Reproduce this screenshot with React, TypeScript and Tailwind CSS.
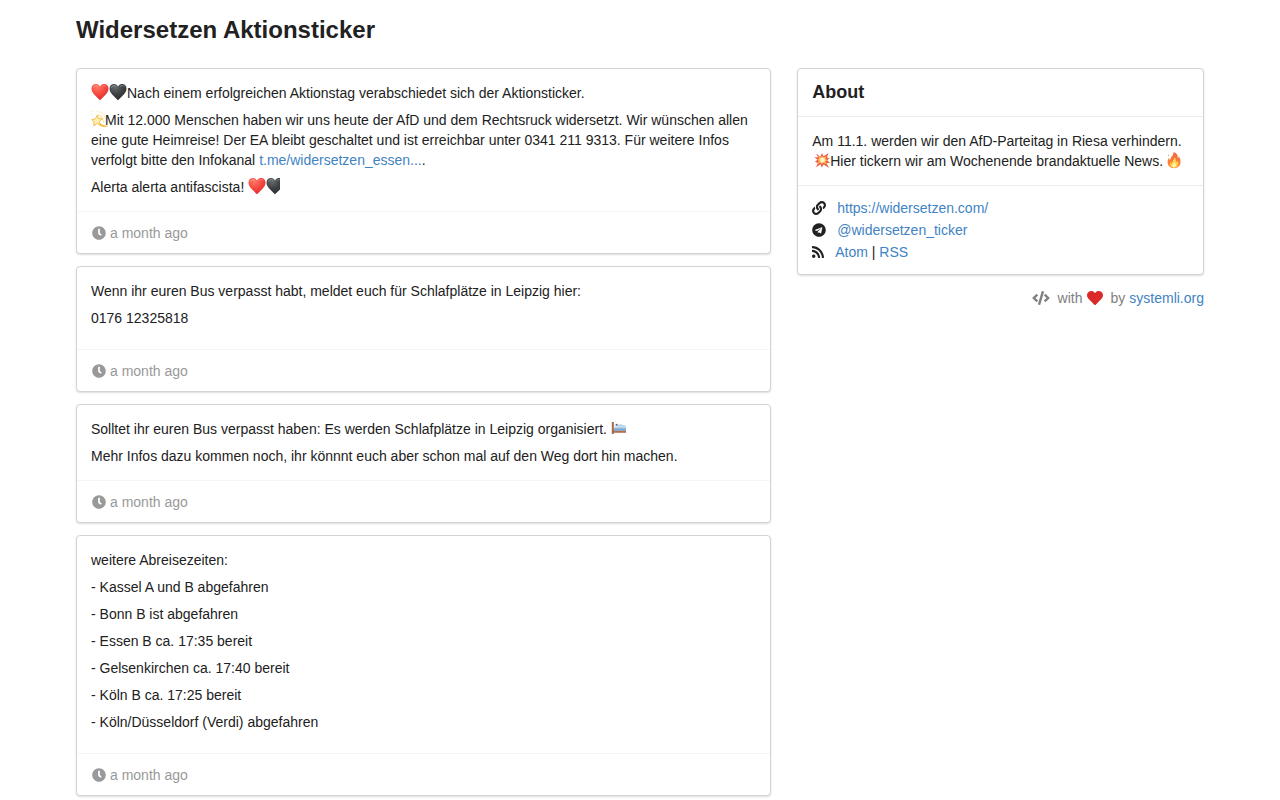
import type { ReactNode } from "react";
import { FaClock, FaCode, FaHeart, FaLink, FaRss, FaTelegram } from "react-icons/fa";

const Heart = ({ dark = false, clipped = false }: { dark?: boolean; clipped?: boolean }) => {
  const id = dark ? "heart-dark" : "heart-red";
  return (
    <svg
      viewBox={clipped ? "0 0 14 18" : "0 0 18 18"}
      className={clipped ? "inline-block h-[18px] w-3.5 align-top" : "inline-block h-[18px] w-[18px] align-top"}
      role="img"
      aria-label={dark ? "black heart" : "red heart"}
    >
      <defs>
        <radialGradient id={id} cx="0.35" cy="0.2" r="0.85">
          <stop offset="0" stopColor={dark ? "#686b6d" : "#ff7a68"} />
          <stop offset="0.5" stopColor={dark ? "#404345" : "#f64a40"} />
          <stop offset="1" stopColor={dark ? "#292b2d" : "#d9292b"} />
        </radialGradient>
      </defs>
      <path
        d="M9 3.6C7.9 1.6 6.4 1 4.9 1 2.3 1 .5 3 .5 5.6c0 4.6 4.3 7.5 8.5 11.7 4.2-4.2 8.5-7.1 8.5-11.7C17.5 3 15.7 1 13.1 1 11.6 1 10.1 1.6 9 3.6z"
        fill={`url(#${id})`}
      />
      <path
        d="M2.5 4.5C3.2 2.8 5 2.2 6.6 3M11.4 3.2c1.3-1 3-.8 4 .4"
        fill="none"
        stroke="#fff"
        strokeOpacity="0.3"
        strokeLinecap="round"
      />
    </svg>
  );
};

const Dizzy = () => (
  <svg viewBox="0 0 18 18" className="-mr-1 inline-block h-[18px] w-[18px] align-top" role="img" aria-label="dizzy">
    <path d="M.5 1.3c.7-.6 1.5-.5 2 .2M.5 5l1.2-.3" stroke="#f9e3a5" fill="none" />
    <path d="M6 1.5c5 .5 8 4 8.500 8" stroke="#fdf0c8" strokeWidth="1.2" fill="none" />
    <path d="M7 4.5c3.5 1.5 5.500 4.500 5.800 8" stroke="#fbe7ae" strokeWidth="1.4" fill="none" />
    <path d="M8.500 12.500c1.800 2.200 4.800 3.400 9 3.200-2.300 2.200-7 2-9.600-1.200z" fill="#f4c04a" />
    <path
      d="M6.400 5l1 3.600 3.900.3-3.100 2.500 1.300 3.700-3.600-1.500-3.100 2.200.2-3.900L.8 9.700l3.700-.9z"
      fill="#fff0b8"
      stroke="#f1bd4c"
      strokeLinejoin="round"
    />
  </svg>
);

const Collision = () => (
  <svg viewBox="0 0 18 18" className="ml-0.5 inline-block h-[18px] w-4 align-top" role="img" aria-label="collision">
    <path
      d="M2.300 1.800l4.800 3.500L9 1l1.700 3.800L16.500 1l-2 5.200 3 .6-2.500 2.400 3 3.100-4 .2 3 5.500-6.200-3.800-2 3.300-1.600-3.700-4.900 3.700 2-5.200L1 11l2.900-2.300L.5 6l4-.2z"
      fill="#ee6048"
    />
    <path
      d="M4.500 4.500l3.500 2L9.200 4l1.300 2.500 3.300-2-.9 3.300 2.400 1.500-2.500 1.300 1.100 3.300-3.600-1.700-1.600 2-1.400-2.400-3.200 1.800L5.500 10 3.800 8.600l2-1z"
      fill="#fdb75d"
    />
    <circle cx="9.6" cy="9" r="2.8" fill="#fff5bb" />
  </svg>
);

const Fire = () => (
  <svg viewBox="0 0 14 18" className="ml-1 inline-block h-[18px] w-3.5 align-top" role="img" aria-label="fire">
    <defs>
      <linearGradient id="flame" x1="0" y1="0" x2="0" y2="1">
        <stop offset="0" stopColor="#f4663f" />
        <stop offset="1" stopColor="#ff8b32" />
      </linearGradient>
    </defs>
    <path
      d="M6.500 1c3.500 1.200 4.700 3.600 4.200 6.200.8-.5 1-1.300.8-2.200C13 7 13.800 9.300 13.400 12c-.4 3.200-2.900 5.200-6.300 5.200C3.300 17.200.8 15 .6 11.600.5 9.500 1.300 8 2 6.800c.1 1.100.5 1.800 1.200 2.300C3.300 5.800 7 4.700 6.500 1z"
      fill="url(#flame)"
    />
    <path
      d="M7.500 6c1.700 2 1 3.800 2 5.200.8-.3 1-1.100 1-1.900 1.800 3.700.4 7.400-3.400 7.400-3.300 0-5-2.500-3.500-5.600.3 1 .7 1.300 1.400 1.500C4.900 9.700 7.600 8.800 7.500 6z"
      fill="#ffd34e"
    />
    <path d="M7.500 11c.2 1.500 1.700 2 1.300 3.900-.6 2-3.300 1.700-3.400-.1 0-1.400 1.600-1.900 2.100-3.800z" fill="#fff4b4" />
    <circle cx="1.5" cy="4.5" r=".7" fill="#f79a71" />
  </svg>
);

const Bed = () => (
  <svg viewBox="0 0 15 18" className="inline-block h-[18px] w-[15px] align-top" role="img" aria-label="bed">
    <path d="M2 11h13v2.800H2z" fill="#b66f4d" />
    <path d="M3 7.500C6 4.800 11 4.800 15 7v5H3z" fill="#a7c7e3" />
    <path d="M7 6.500c3-1 6-.3 8 .8v2.200c-3-.9-5-.9-8-.5z" fill="#bcd8ef" />
    <path d="M3 9.500h12V12H3z" fill="#84a9cc" />
    <path d="M2.600 5.500l4 .2.7 2.300-4.200.7z" fill="#e3edf5" />
    <circle cx="5.7" cy="5.8" r="1.1" fill="#69737b" />
    <path d="M.8 3h2v12h-2z" fill="#aa6645" />
  </svg>
);

const linkClass = "text-[#4183c4] hover:text-[#1e70bf]";
const cardClass = "rounded border border-[#d4d4d5] bg-white shadow-[0_1px_2px_rgba(34,36,38,0.15)]";

const Message = ({ children, extraSpace = false }: { children: ReactNode; extraSpace?: boolean }) => (
  <article className={cardClass}>
    <div className={extraSpace ? "space-y-[7px] px-3.5 pt-3.5 pb-[21px]" : "space-y-[7px] px-3.5 py-3.5"}>
      {children}
    </div>
    <footer className="flex items-center gap-1 border-t border-[#f5f5f5] px-[15px] pt-[11px] pb-2.5 text-[#999999]">
      <FaClock className="h-3.5 w-3.5" />
      <span>a month ago</span>
    </footer>
  </article>
);

const departures = [
  "- Kassel A und B abgefahren",
  "- Bonn B ist abgefahren",
  "- Essen B ca. 17:35 bereit",
  "- Gelsenkirchen ca. 17:40 bereit",
  "- Köln B ca. 17:25 bereit",
  "- Köln/Düsseldorf (Verdi) abgefahren",
];

export default function App() {
  return (
    <div className="mx-auto max-w-[1154px] font-['Liberation_Sans',Arial,sans-serif] text-sm leading-5 text-[#212121]">
      <h1 className="px-[13px] pt-3.5 pb-[22px] text-2xl leading-8 font-bold">Widersetzen Aktionsticker</h1>
      <div className="flex flex-col md:flex-row">
        <main className="flex flex-col gap-3 px-[13px] pb-3.5 md:w-5/8">
          <Message>
            <p>
              <Heart />
              <Heart dark />
              Nach einem erfolgreichen Aktionstag verabschiedet sich der Aktionsticker.
            </p>
            <p>
              <Dizzy />
              Mit 12.000 Menschen haben wir uns heute der AfD und dem Rechtsruck widersetzt. Wir wünschen allen eine
              gute Heimreise! Der EA bleibt geschaltet und ist erreichbar unter 0341 211 9313. Für weitere Infos
              verfolgt bitte den Infokanal{" "}
              <a href="https://t.me/widersetzen_essen" className={linkClass}>
                t.me/widersetzen_essen...
              </a>
              .
            </p>
            <p>
              Alerta alerta antifascista! <Heart />
              <Heart dark clipped />
            </p>
          </Message>
          <Message extraSpace>
            <p>Wenn ihr euren Bus verpasst habt, meldet euch für Schlafplätze in Leipzig hier:</p>
            <p>0176 12325818</p>
          </Message>
          <Message>
            <p>
              Solltet ihr euren Bus verpasst haben: Es werden Schlafplätze in Leipzig organisiert. <Bed />
            </p>
            <p>Mehr Infos dazu kommen noch, ihr könnnt euch aber schon mal auf den Weg dort hin machen.</p>
          </Message>
          <Message extraSpace>
            <p>weitere Abreisezeiten:</p>
            {departures.map((line) => (
              <p key={line}>{line}</p>
            ))}
          </Message>
        </main>
        <aside className="px-[13px] md:w-3/8">
          <section className={cardClass}>
            <h2 className="px-3.5 pt-[11px] pb-3 text-lg leading-6 font-bold">About</h2>
            <div className="border-t border-[#ececec] px-3.5 py-3.5">
              <p>
                Am 11.1. werden wir den AfD-Parteitag in Riesa verhindern.
                <br />
                <Collision />
                Hier tickern wir am Wochenende brandaktuelle News.
                <Fire />
              </p>
            </div>
            <ul className="border-t border-[#ececec] px-3.5 py-[11px] leading-[22px]">
              <li className="flex items-center gap-[11px]">
                <FaLink className="h-3.5 w-3.5" />
                <a href="https://widersetzen.com/" className={linkClass}>
                  https://widersetzen.com/
                </a>
              </li>
              <li className="flex items-center gap-[11px]">
                <FaTelegram className="h-3.5 w-3.5" />
                <a href="https://t.me/widersetzen_ticker" className={linkClass}>
                  @widersetzen_ticker
                </a>
              </li>
              <li className="flex items-center gap-[11px]">
                <FaRss className="h-3.5 w-3" />
                <span>
                  <a href="#atom" className={linkClass}>
                    Atom
                  </a>{" "}
                  |{" "}
                  <a href="#rss" className={linkClass}>
                    RSS
                  </a>
                </span>
              </li>
            </ul>
          </section>
          <div className="flex items-center justify-end gap-1 pt-[13px] text-[#808080]">
            <FaCode className="mr-1 h-3.5 w-[18px]" />
            <span>with</span>
            <FaHeart className="mr-1 h-4 w-4 text-[#db2828]" />
            <span>by</span>
            <a href="https://www.systemli.org" className={linkClass}>
              systemli.org
            </a>
          </div>
        </aside>
      </div>
    </div>
  );
}
